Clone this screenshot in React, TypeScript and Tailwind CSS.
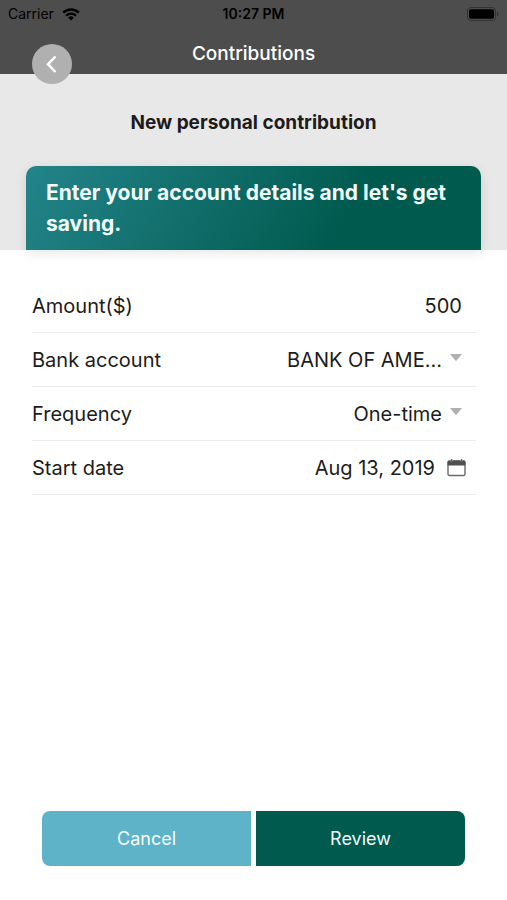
import { useState } from 'react'
import type { ReactNode } from 'react'

function WifiIcon() {
  return (
    <svg viewBox="0 0 18 13" className="h-[13px] w-[18px]" aria-hidden="true">
      <path d="M1.2 4.6a11.2 11.2 0 0 1 15.6 0" fill="none" stroke="#000" strokeWidth="2.5" />
      <path d="M4.1 7.7a7 7 0 0 1 9.8 0" fill="none" stroke="#000" strokeWidth="2.3" />
      <path d="M9 12.4 6.2 9.7a4 4 0 0 1 5.6 0z" fill="#000" />
    </svg>
  )
}

function BatteryIcon() {
  return (
    <svg viewBox="0 0 32 14" className="h-[14px] w-8" aria-hidden="true">
      <rect x="0.5" y="0.5" width="28" height="13" rx="3.5" fill="none" stroke="#333" />
      <rect x="2" y="2.2" width="25" height="9.6" rx="2" fill="#000" />
      <path d="M30 4.8c1.9.6 1.9 3.8 0 4.4z" fill="#333" />
    </svg>
  )
}

function Caret() {
  return (
    <svg viewBox="0 0 12 7" className="pointer-events-none mb-1 h-[7px] w-3 shrink-0" aria-hidden="true">
      <path d="M0 0h12L6.6 6.6a.9.9 0 0 1-1.2 0z" fill="#b0b0b0" />
    </svg>
  )
}

function CalendarIcon() {
  return (
    <svg viewBox="0 0 19 18" className="h-[18px] w-[19px] shrink-0" aria-hidden="true">
      <rect x="1" y="2" width="17" height="14.5" rx="1.5" fill="#fff" stroke="#6a6a6a" strokeWidth="1.4" />
      <path d="M.6 6.4V3Q.6 1.4 2.2 1.4h14.6q1.6 0 1.6 1.6v3.4z" fill="#505050" />
      <path d="M4.5 .2v2M14.5 .2v2" stroke="#ccc" strokeWidth="2.2" />
      <path d="M4.5 .2v2.200M14.5 .2v2.200" stroke="#555" strokeWidth="1.2" />
    </svg>
  )
}

function Row({ id, label, children }: { id: string; label: string; children: ReactNode }) {
  return (
    <div className="flex h-[54px] items-center justify-between border-b border-[#ebebeb]">
      <label htmlFor={id} className="shrink-0">
        {label}
      </label>
      {children}
    </div>
  )
}

const fieldClass = 'min-w-0 appearance-none bg-transparent text-right outline-none'

export default function App() {
  const [amount, setAmount] = useState('500')
  const [account, setAccount] = useState('boa')
  const [frequency, setFrequency] = useState('once')
  const [date, setDate] = useState('Aug 13, 2019')

  return (
    <div className="flex min-h-screen flex-col bg-white font-['Inter',sans-serif] text-xl text-[#1c1c1c]">
      <header className="relative bg-[#4d4d4d]">
        <div className="grid h-7 grid-cols-[1fr_auto_1fr] items-center px-2 text-sm text-black">
          <div className="flex items-center gap-2">
            <span>Carrier</span>
            <WifiIcon />
          </div>
          <span className="text-center font-semibold">10:27 PM</span>
          <div className="flex justify-end">
            <BatteryIcon />
          </div>
        </div>
        <h1 className="h-[46px] pt-2.5 text-center text-[19px] leading-8 font-medium text-white">Contributions</h1>
        {/* back button hangs over the lower edge of the bar */}
        <button
          type="button"
          aria-label="Back"
          className="absolute -bottom-2.5 left-8 flex h-10 w-10 items-center justify-center rounded-full bg-[#b0b0b0]"
        >
          <svg viewBox="0 0 12 20" className="h-5 w-3" aria-hidden="true">
            <path d="M9.5 2.5 2 10.2 9.5 18" fill="none" stroke="#fff" strokeWidth="2.5" />
          </svg>
        </button>
      </header>

      <section className="bg-[#e8e8e8] px-[26px] pt-8">
        <h2 className="mb-[26px] text-center text-[19px] leading-[34px] font-bold">New personal contribution</h2>
        <div className="rounded-t-[10px] bg-[linear-gradient(120deg,#23848a_0%,#005a4e_70%)] px-5 py-[11px] text-[21px] leading-[31px] font-bold text-[#f2fcfb] shadow-[0_3px_12px_rgba(0,0,0,0.1)]">
          Enter your account details and let's get saving.
        </div>
      </section>

      <form className="flex grow flex-col" onSubmit={(e) => e.preventDefault()}>
        <div className="mr-[31px] ml-8 pt-[29px]">
          <Row id="amount" label="Amount($)">
            <input
              id="amount"
              inputMode="decimal"
              value={amount}
              onChange={(e) => setAmount(e.target.value)}
              className={`${fieldClass} mr-3.5 w-48`}
            />
          </Row>
          <Row id="account" label="Bank account">
            <div className="mr-3.5 flex items-center gap-2">
              <select
                id="account"
                value={account}
                onChange={(e) => setAccount(e.target.value)}
                className={`${fieldClass} [text-align-last:right]`}
              >
                <option value="boa">BANK OF AME...</option>
              </select>
              <Caret />
            </div>
          </Row>
          <Row id="frequency" label="Frequency">
            <div className="mr-3.5 flex items-center gap-2">
              <select
                id="frequency"
                value={frequency}
                onChange={(e) => setFrequency(e.target.value)}
                className={`${fieldClass} [text-align-last:right]`}
              >
                <option value="once">One-time</option>
              </select>
              <Caret />
            </div>
          </Row>
          <Row id="start" label="Start date">
            <div className="mr-2.5 flex items-center gap-3">
              <input
                id="start"
                value={date}
                onChange={(e) => setDate(e.target.value)}
                className={`${fieldClass} w-48`}
              />
              <CalendarIcon />
            </div>
          </Row>
        </div>

        <div className="mt-auto grid grid-cols-2 gap-[5px] px-[42px] pt-8 pb-[34px] text-lg text-[#f2fcfb]">
          <button type="button" className="h-[55px] rounded-l-lg bg-[#5fb3c8]">
            Cancel
          </button>
          <button type="submit" className="h-[55px] rounded-r-lg bg-[#005a4e]">
            Review
          </button>
        </div>
      </form>
    </div>
  )
}
